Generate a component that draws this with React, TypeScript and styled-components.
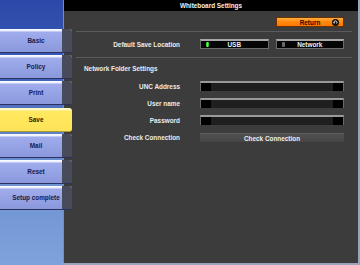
import React from "react";
import styled, { createGlobalStyle } from "styled-components";

const GlobalStyle = createGlobalStyle`
  html, body {
    margin: 0;
    padding: 0;
    background: #9aa4b8;
  }
  body {
    font-family: "Liberation Sans", Arial, sans-serif;
    font-weight: bold;
  }
`;

const menu = ["Basic", "Policy", "Print", "Save", "Mail", "Reset", "Setup complete"];
const current = "Save";

const Screen = styled.div`
  width: 360px;
  height: 265px;
  display: flex;
  overflow: hidden;
  background: #9aa4b8;
`;

const Sidebar = styled.nav`
  width: 63px;
  flex: none;
  height: 265px;
  position: relative;
  z-index: 1;
  box-sizing: border-box;
  padding-top: 29px;
  display: flex;
  flex-direction: column;
  gap: 2.2px;
  background: linear-gradient(to bottom, #2c48a8 0%, #3d5cb8 25%, #6a8ed0 60%, #7ea2da 100%);
`;

const MenuButton = styled.div<{ $active: boolean }>`
  width: 72px;
  height: 24px;
  flex: none;
  box-sizing: border-box;
  display: flex;
  align-items: center;
  justify-content: center;
  font-size: 6.4px;
  color: ${(p) => (p.$active ? "#2a2400" : "#141c50")};
  border-radius: 0 3px 3px 0;
  border-bottom: 1px solid ${(p) => (p.$active ? "#b09a30" : "#2a3060")};
  background: ${(p) =>
    p.$active
      ? "linear-gradient(to bottom, #fff8c0 0, #fff8c0 2px, #ffe860 3px, #ffe458 100%)"
      : "linear-gradient(to right, transparent 0, transparent 62px, #474b5a 62px), linear-gradient(to bottom, #ffffff 0, #e8ecff 2px, #a0acec 3px, #8a98dc 100%)"};
`;

const Panel = styled.main`
  width: 295px;
  height: 263px;
  flex: none;
  box-sizing: border-box;
  border-left: 1px solid #7c8cb0;
  background: #3c3c3c;
  display: flex;
  flex-direction: column;
  color: #ececec;
  font-size: 6.4px;
`;

const TitleBar = styled.header`
  height: 11px;
  flex: none;
  background: #000;
  color: #f2f2f2;
  display: flex;
  align-items: center;
  justify-content: center;
  font-size: 6.4px;
`;

const Toolbar = styled.div`
  display: flex;
  justify-content: flex-end;
  padding: 6px 14px 0 0;
`;

const ReturnButton = styled.div`
  width: 68px;
  height: 10px;
  box-sizing: border-box;
  border: 1px solid #6a3000;
  background: linear-gradient(to bottom, #ffb040 0%, #ff8a10 45%, #ff7800 100%);
  color: #1a0a00;
  display: flex;
  align-items: center;
  justify-content: center;
  position: relative;
  font-size: 6.4px;
`;

const ReturnIcon = styled.svg`
  position: absolute;
  right: 4px;
  top: 1px;
`;

const Rule = styled.hr<{ $top: number }>`
  border: none;
  height: 1px;
  background: #5a5a5a;
  margin: ${(p) => p.$top}px 6px 0 12px;
`;

const Row = styled.div<{ $top: number }>`
  display: grid;
  grid-template-columns: 116px 144px;
  column-gap: 20px;
  align-items: center;
  margin-top: ${(p) => p.$top}px;
`;

const Label = styled.span`
  text-align: right;
`;

const Choices = styled.div`
  display: flex;
  gap: 7px;
`;

const Choice = styled.div`
  width: 69px;
  height: 10px;
  box-sizing: border-box;
  border: 1px solid #6c6c6c;
  border-top: 2px solid #a8a8a8;
  background: #050505;
  color: #f0f0f0;
  display: flex;
  align-items: center;
  justify-content: center;
  position: relative;
`;

const Led = styled.i<{ $on: boolean }>`
  position: absolute;
  left: 5px;
  top: 1px;
  width: 3px;
  height: 5px;
  border-radius: 1px;
  background: ${(p) => (p.$on ? "linear-gradient(to right, #20b020, #60ff40, #20b020)" : "#6a6a6a")};
`;

const SectionTitle = styled.div`
  padding-left: 20px;
  margin-top: 7px;
`;

const Field = styled.div`
  height: 10px;
  box-sizing: border-box;
  border-top: 2px solid #9a9a9a;
  border-left: 1px solid #6a6a6a;
  border-right: 1px solid #6a6a6a;
  background: linear-gradient(
    to right,
    #000 0,
    #000 10px,
    #1f1f1f 10px,
    #1f1f1f calc(100% - 10px),
    #000 calc(100% - 10px)
  );
`;

const ActionButton = styled.div`
  height: 9px;
  box-sizing: border-box;
  border-top: 1px solid #5c5c5c;
  background: linear-gradient(to bottom, #505050, #464646);
  color: #f0f0f0;
  display: flex;
  align-items: center;
  justify-content: center;
`;

const App: React.FC = () => {
  return (
    <>
      <GlobalStyle />
      <Screen>
        <Sidebar>
          {menu.map((name) => (
            <MenuButton key={name} $active={name === current}>
              {name}
            </MenuButton>
          ))}
        </Sidebar>
        <Panel>
          <TitleBar>Whiteboard Settings</TitleBar>
          <Toolbar>
            <ReturnButton>
              Return
              <ReturnIcon width="7" height="7" viewBox="0 0 10 10">
                <circle cx="5" cy="5" r="5" fill="#111" />
                <path d="M3 6 A2.2 2.2 0 1 1 6.5 6.5" stroke="#fff" strokeWidth="1.3" fill="none" />
                <path d="M1.8 4.6 L3 6.6 L4.6 5.2 Z" fill="#fff" />
              </ReturnIcon>
            </ReturnButton>
          </Toolbar>
          <Rule $top={4} />
          <Row $top={7}>
            <Label>Default Save Location</Label>
            <Choices>
              <Choice>
                <Led $on />
                USB
              </Choice>
              <Choice>
                <Led $on={false} />
                Network
              </Choice>
            </Choices>
          </Row>
          <Rule $top={8} />
          <SectionTitle>Network Folder Settings</SectionTitle>
          <Row $top={9}>
            <Label>UNC Address</Label>
            <Field />
          </Row>
          <Row $top={7}>
            <Label>User name</Label>
            <Field />
          </Row>
          <Row $top={7}>
            <Label>Password</Label>
            <Field />
          </Row>
          <Row $top={8}>
            <Label>Check Connection</Label>
            <ActionButton>Check Connection</ActionButton>
          </Row>
        </Panel>
      </Screen>
    </>
  );
};

export default App;
